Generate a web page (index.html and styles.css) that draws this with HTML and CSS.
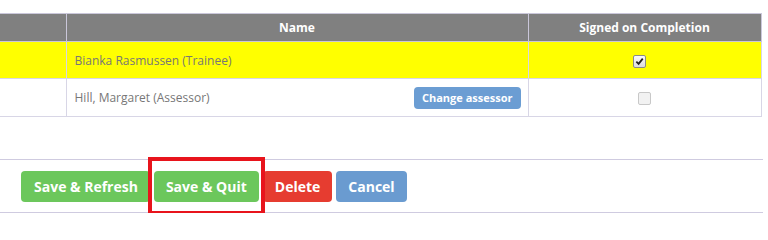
FILE: index.html
```html
<!DOCTYPE html>
<html>
<head>
<meta charset="utf-8">
<link rel="stylesheet" href="styles.css">
</head>
<body>
<table class="grid">
  <colgroup>
    <col class="c1">
    <col class="c2">
    <col class="c3">
  </colgroup>
  <thead>
    <tr>
      <th class="first"></th>
      <th>Name</th>
      <th>Signed on Completion</th>
    </tr>
  </thead>
  <tbody>
    <tr class="hl">
      <td class="first"></td>
      <td class="name">Bianka Rasmussen (Trainee)</td>
      <td class="chk"><span class="box checked"><svg viewBox="0 0 10 10" width="9" height="9"><path d="M1.5 5.2 L4 7.6 L8.6 1.8" fill="none" stroke="#222" stroke-width="2"/></svg></span></td>
    </tr>
    <tr class="r2">
      <td class="first"></td>
      <td class="name"><div class="namecell"><span>Hill, Margaret (Assessor)</span><button class="small">Change assessor</button></div></td>
      <td class="chk"><span class="box plain"></span></td>
    </tr>
  </tbody>
</table>
<div class="actions">
  <button class="btn green wide">Save &amp; Refresh</button>
  <span class="mark"><button class="btn green">Save &amp; Quit</button></span>
  <button class="btn red">Delete</button>
  <button class="btn blue">Cancel</button>
</div>
</body>
</html>
```
FILE: styles.css
```css
body {
  margin: 0;
  font-family: "Open Sans", sans-serif;
  font-size: 12px;
  color: #777;
  background: #fff;
}
.grid {
  border-collapse: collapse;
  table-layout: fixed;
  margin-top: 13px;
  width: 761px;
}
.c1 { width: 66px; }
.c2 { width: 462px; }
.c3 { width: 233px; }
.grid th, .grid td {
  border: 1px solid #d8d6e6;
  padding: 0;
}
.grid .first { border-left: none; }
.grid th {
  background: #808080;
  color: #fff;
  font-weight: 700;
  height: 27px;
  border-color: #cac7da;
}
.hl td {
  background: #ffff00;
  height: 36px;
}
.r2 td { height: 37px; }
.name { padding: 0 7px 0 8px !important; }
.namecell {
  display: flex;
  align-items: center;
  justify-content: space-between;
}
.small {
  background: #6b9dd3;
  color: #fff;
  border: none;
  border-radius: 4px;
  font-family: "Open Sans", sans-serif;
  font-weight: 700;
  font-size: 11px;
  height: 22px;
  padding: 0 8px;
}
.chk { text-align: center; }
.box {
  display: inline-flex;
  align-items: center;
  justify-content: center;
  width: 11px;
  height: 11px;
  border-radius: 2px;
  vertical-align: middle;
}
.checked {
  border: 1px solid #8a8a8a;
  background: linear-gradient(#fafafa, #dcdcdc);
  margin-right: 10px;
}
.plain {
  border: 1px solid #c8c8c8;
  background: #f2f2f2;
}
.actions {
  margin-top: 42px;
  width: 763px;
  border-top: 1px solid #cfcbe0;
  border-bottom: 1px solid #cfcbe0;
  padding: 11px 0 10px 21px;
  box-sizing: border-box;
  display: flex;
  gap: 4px;
}
.btn {
  height: 31px;
  padding: 0 12px;
  border: none;
  border-radius: 4px;
  color: #fff;
  font-family: "Open Sans", sans-serif;
  font-weight: 700;
  font-size: 14px;
}
.btn.wide { padding: 0 12px 0 13px; }
.green { background: #6cc75c; }
.red { background: #e63c30; }
.blue { background: #6a9bd0; }
.mark {
  position: relative;
  display: flex;
}
.mark::after {
  content: "";
  position: absolute;
  left: -6px;
  right: -6px;
  top: -14px;
  bottom: -13px;
  border: 4px solid #e8141c;
  pointer-events: none;
}
```
